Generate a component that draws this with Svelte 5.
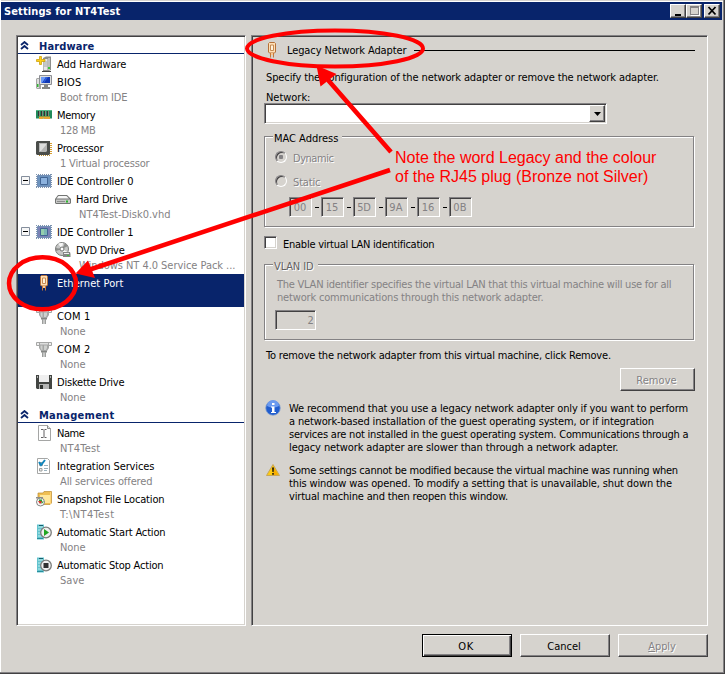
<script>
  // Spreads letters so that a label takes exactly the given advance width.
  function fit(node, width) {
    const natural = node.getBoundingClientRect().width;
    const count = node.textContent.length;
    node.style.letterSpacing = `${(width - 0.6 - natural) / count}px`;
  }

  const hardware = [
    { icon: 'add', name: ['Add Hardware', 71] },
    { icon: 'bios', name: ['BIOS', 26], sub: ['Boot from IDE', 69] },
    { icon: 'memory', name: ['Memory', 40], sub: ['128 MB', 37] },
    { icon: 'cpu', name: ['Processor', 48], sub: ['1 Virtual processor', 91] },
    { icon: 'ide', name: ['IDE Controller 0', 78], open: true },
    { icon: 'disk', name: ['Hard Drive', 53], sub: ['NT4Test-Disk0.vhd', 93], child: true },
    { icon: 'ide1', name: ['IDE Controller 1', 78], open: true },
    { icon: 'dvd', name: ['DVD Drive', 50], sub: ['Windows NT 4.0 Service Pack ...', 158], child: true },
    { icon: 'plug', name: ['Ethernet Port', 68], sub: ['', 0], selected: true },
    { icon: 'com', name: ['COM 1', 35], sub: ['None', 27] },
    { icon: 'com', name: ['COM 2', 35], sub: ['None', 27] },
    { icon: 'floppy', name: ['Diskette Drive', 69], sub: ['None', 27] },
  ];
  const management = [
    { icon: 'name', name: ['Name', 29], sub: ['NT4Test', 42] },
    { icon: 'services', name: ['Integration Services', 99], sub: ['All services offered', 94] },
    { icon: 'snapshot', name: ['Snapshot File Location', 109], sub: ['T:\\NT4Test', 56] },
    { icon: 'start', name: ['Automatic Start Action', 110], sub: ['None', 27] },
    { icon: 'stop', name: ['Automatic Stop Action', 108], sub: ['Save', 26] },
  ];
  const sections = [
    { title: ['Hardware', 57], items: hardware },
    { title: ['Management', 77], items: management },
  ];
  const mac = ['00', '15', '5D', '9A', '16', '0B'];
  const vlanHelp = [
    ['The VLAN identifier specifies the virtual LAN that this virtual machine will use for all', 396],
    ['network communications through this network adapter.', 268],
  ];
  const info = [
    ['We recommend that you use a legacy network adapter only if you want to perform', 400.5],
    ['a network-based installation of the guest operating system, or if integration', 366.5],
    ['services are not installed in the guest operating system. Communications through a', 401],
    ['legacy network adapter are slower than through a network adapter.', 331],
  ];
  const warning = [
    ['Some settings cannot be modified because the virtual machine was running when', 390.5],
    ['this window was opened. To modify a setting that is unavailable, shut down the', 384.5],
    ['virtual machine and then reopen this window.', 220.5],
  ];
</script>

{#snippet label([text, width], cls = '')}
  <span class="t {cls}" use:fit={width}>{text}</span>
{/snippet}

{#snippet icon(kind)}
  <svg class="icon" width="16" height="16" viewBox="0 0 16 16">
    {#if kind === 'add'}
      <path d="M7 2l3-1.500h5V14l-2 1H7z" fill="#8c8e8c" />
      <path d="M7.500 3h4v11h-4z" fill="#e7e7e7" /><path d="M12 2h2v12h-2z" fill="#bdbebd" />
      <path d="M8 6h3M8 8h3M8 10h3" stroke="#a5a6a5" />
      <path d="M12 11h2v2h-2z" fill="#39c739" />
      <path d="M6 15.500h9" stroke="#424142" />
      <path d="M3.500 .5h2v3h3.500v2H5.500v3h-2v-3H.5v-2h3z" fill="#ffcf18" stroke="#c69a00" stroke-width=".7" />
    {:else if kind === 'bios'}
      <path d="M0 5l1-1h4v11H1l-1-1z" fill="#a5a6a5" /><path d="M1 5h2v9H1z" fill="#dedfde" />
      <path d="M1 10h1.500v3H1z" fill="#31b631" />
      <path d="M3.500 1.500h12v9h-12z" fill="#dedfde" stroke="#8c8e94" />
      <path d="M5 3h9v6H5z" fill="#1038b5" /><path d="M5 3h5L6 9H5z" fill="#6b9af7" /><path d="M10 3h2l-4 6H7z" fill="#3161de" />
      <path d="M8 11h4v2h2v2H6v-2h2z" fill="#848684" />
    {:else if kind === 'memory'}
      <path d="M0 3h16v8.500H0z" fill="#218a5a" /><path d="M0 3h16v1H0z" fill="#52b684" />
      <path d="M2 4h2v5H2zM5 4h2v5H5zM8 4h2v5H8zM11 4h2v5h-2z" fill="#313431" />
      <path d="M3 4h1v5H3zM6 4h1v5H6zM9 4h1v5H9zM12 4h1v5h-1z" fill="#7b8a7b" />
      <path d="M3 9.500h11V12H8v-1H7v1H3z" fill="#e7a631" />
    {:else if kind === 'cpu'}
      <path d="M1 1h13v13l-1 1H1l-1-1V2z" fill="#4a4d4a" />
      <path d="M3 3h8v8l-1 1H3z" fill="#b5b6b5" /><path d="M4 4h6v1L5 11H4z" fill="#dedfde" />
      <path d="M15 3v11" stroke="#d69e31" stroke-width="2" stroke-dasharray="1 1" /><path d="M3 15.500h11" stroke="#b58a31" stroke-dasharray="1 1" />
    {:else if kind === 'ide' || kind === 'ide1'}
      <path d="M0 1.500h16M0 14.500h16" stroke="#7b92ad" stroke-dasharray="1 1" />
      <path d="M.5 1v14M15.500 1v14" stroke="#7b92ad" stroke-dasharray="1 1" />
      <path d="M1.500 2.500h13v11h-13z" fill={kind === 'ide' ? '#6b92bd' : '#7b82b5'} stroke="#738eb5" />
      <path d="M4.500 4.500h7v7h-7z" fill={kind === 'ide' ? '#8cb2de' : '#7bb6b5'} stroke="#426594" />
      {#if kind === 'ide1'}<path d="M5 5h3v6H5z" fill="#94cfad" />{/if}
    {:else if kind === 'disk'}
      <path d="M3 4h9l4 4v4l-1 1H1l-1-1V8z" fill="#737573" />
      <path d="M3.500 5h8L14 7.500H1.500z" fill="#f7f7f7" /><path d="M1 8.500h14V12H1z" fill="#c6c7c6" />
      <path d="M2 10.500h8" stroke="#8c8e8c" /><path d="M11 9.500h2v2h-2z" fill="#29b629" />
    {:else if kind === 'dvd'}
      <circle cx="7" cy="7" r="6.500" fill="#c6c7c6" stroke="#7b7d7b" />
      <path d="M7 7L3 1.500 8 .8zM7 7l5.500 3-3 3z" fill="#f7f7f7" /><path d="M7 7L1 6v3zM7 7l6-3-3-3z" fill="#8c8e8c" />
      <circle cx="7" cy="7" r="2" fill="#fff" stroke="#737573" />
      <path d="M8 10h7l.5 2v3H8v-3z" fill="#848684" /><path d="M9 11h5v1H9z" fill="#efefef" /><path d="M12 13h2v1h-2z" fill="#39c739" />
    {:else if kind === 'plug'}
      <path d="M4.500 1.500l1-1h5l1 1V10l-1 1h-5l-1-1z" fill="#ffdfb5" stroke="#b57139" />
      <path d="M6.500 3v5.500h3V3z" fill="#fff3de" stroke="#c68a52" />
      <path d="M6.500 11v4.500M9.500 11v4.500" stroke="#c67939" /><path d="M7 11h2v2H7z" fill="#f7c794" />
    {:else if kind === 'com'}
      <path d="M.5 1.500h15v3h-15z" fill="#efefef" stroke="#a5a6a5" />
      <path d="M3 1h10v6l-2 3H5L3 7z" fill="#a5a6a5" />
      <path d="M4 2h8v1.500H4z" fill="#dedfde" /><path d="M4.500 4.500h2V9h-1l-1-2zM8 4.500h3V7l-1 2H8z" fill="#ced0ce" />
      <path d="M5 10h6v1.500H5z" fill="#848684" />
      <path d="M6 11h1.500v5H6zM8.500 11H10v5H8.500z" fill="#9c9e9c" /><path d="M7 12h2v4H7z" fill="#c6c7c6" />
    {:else if kind === 'floppy'}
      <path d="M0 1h16v14H1l-1-1z" fill="#424542" /><path d="M3 1h10v7H3z" fill="#efefef" />
      <path d="M3 10h10v5H3z" fill="#b5b6b5" /><path d="M4 11h3v4H4z" fill="#313431" />
      <path d="M1 2h1v2H1zM14 2h1v2h-1z" fill="#adaead" />
    {:else if kind === 'name'}
      <path d="M2.500.5h9l3 3v12h-12z" fill="#fff" stroke="#a5a6a5" /><path d="M11.500.5v3h3" fill="#dedfde" stroke="#8c8e8c" />
      <path d="M5 4.500h2.500M8.500 4.500h2M8 5v7M5 12.500h2.500M8.500 12.500h2" stroke="#636163" />
    {:else if kind === 'services'}
      <path d="M1.500.5h10l2 2v13h-12z" fill="#fff" stroke="#a5a6a5" />
      <path d="M3.500 4.500h3v3h-3zM3.500 10.500h2.500v2.500h-2.500z" fill="#efefef" stroke="#9c9e9c" />
      <path d="M3 4l2 3 4-5" fill="none" stroke="#1086bd" stroke-width="2" /><path d="M8 7.500h4M8 10.500h4M8 12.500h3" stroke="#9cb2bd" />
    {:else if kind === 'snapshot'}
      <path d="M2 2h5l1-1.500h7.500V12L14 13.500H2z" fill="#efbe52" stroke="#bd8e31" stroke-width=".7" />
      <path d="M4 4h11v8H4z" fill="#ffe79c" /><path d="M14 1h1v12h-1z" fill="#ffd373" />
      <path d="M0 6h7v1.500H0z" fill="#8c8e8c" />
      <circle cx="4.500" cy="11" r="4" fill="#f7f7f7" stroke="#848684" />
      <path d="M3 8.500h3v2h2L5.500 13V11H3z" fill="#299e31" /><path d="M2 10h3l1 1-2 2z" fill="#d63429" />
    {:else if kind === 'start' || kind === 'stop'}
      <path d="M1 .5h7v15H1z" fill="#63c3ce" /><path d="M2 3h5M2 6h4M2 9h3M2 12h4" stroke="#bdefef" />
      <path d="M3 1.500h4" stroke="#185d6b" /><path d="M1 14.500h6" stroke="#298e9c" />
      <circle cx="10" cy="8.500" r="5.300" fill="#efefef" stroke="#7b7d7b" stroke-width="1.300" />
      {#if kind === 'start'}<path d="M8 5l5 3.500L8 12z" fill="#21a621" />{:else}<path d="M7.500 6h5v5h-5z" fill="#313031" />{/if}
    {:else if kind === 'info'}
      <circle cx="8" cy="8" r="7.300" fill="#215dce" stroke="#8ca6ce" stroke-width=".8" />
      <path d="M2 6a6 6 0 0 1 12 0q-6 3-12 0z" fill="#6b9aef" />
      <path d="M7 3h2.500v2H7zM6 6.500h3.500V12H11v1H6v-1h1V7.500H6z" fill="#fff" />
    {:else if kind === 'warn'}
      <path d="M8 2.500l6.500 11H1.500z" fill="#ffcb10" stroke="#c6a65a" stroke-linejoin="round" />
      <path d="M8 4v9h5.500z" fill="#f7ae00" />
      <path d="M7 5.500h2l-.4 4.500H7.400zM7.200 11h1.600v1.700H7.200z" fill="#211c10" />
    {/if}
  </svg>
{/snippet}

<div class="window">
  <header>
    {@render label(['Settings for NT4Test', 118], 'title')}
    <div class="controls">
      <button aria-label="Minimize"><svg width="12" height="10"><path d="M3 8h6v2H3z" /></svg></button>
      <button aria-label="Maximize" class="max"><svg width="12" height="10"><path d="M11.500 1v9M3 9.500h9" stroke="#fff" /><path d="M2 0h9v9H2zM3 2v6h7V2z" fill="#848284" fill-rule="evenodd" /></svg></button>
      <button aria-label="Close"><svg width="12" height="10"><path d="M2.500 1l7 7.500M9.500 1l-7 7.500" stroke="#000" stroke-width="1.800" /></svg></button>
    </div>
  </header>

  <main>
    <nav class="sunken">
      {#each sections as section}
        <div class="section">
          <svg width="9" height="9"><path d="M1 4l3.500-3L8 4M1 8l3.500-3L8 8" fill="none" stroke="#08246b" stroke-width="1.800" /></svg>
          {@render label(section.title, 'bold')}
        </div>
        {#each section.items as item}
          <div class="item" class:child={item.child} class:selected={item.selected}>
            <div class="twist">
              {#if item.open}<svg width="9" height="9"><path d="M.5.5h8v8h-8z" fill="#f7f7f7" stroke="#848e9c" /><path d="M2 4.500h5" stroke="#000" /></svg>{/if}
            </div>
            {@render icon(item.icon)}
            <div class="texts">
              {@render label(item.name)}
              {#if item.sub}<div class="sub">{#if item.sub[0]}{@render label(item.sub)}{/if}</div>{/if}
            </div>
          </div>
        {/each}
      {/each}
    </nav>

    <section class="sunken panel">
      <div class="heading">
        {@render icon('plug')}
        {@render label(['Legacy Network Adapter', 121])}
        <i></i>
      </div>
      <div class="intro">{@render label(['Specify the configuration of the network adapter or remove the network adapter.', 394.5])}</div>
      <div class="network">{@render label(['Network:', 46])}</div>
      <div class="combo"><button aria-label="Open list"><svg width="7" height="4"><path d="M0 0h7L3.500 4z" /></svg></button></div>

      <div class="group mac">
        <div class="legend">{@render label(['MAC Address', 66])}</div>
        <div class="radio"><span class="dot on"></span>{@render label(['Dynamic', 42], 'etched')}</div>
        <div class="radio"><span class="dot"></span>{@render label(['Static', 29], 'etched')}</div>
        <div class="bytes">
          {#each mac as byte, i}
            {#if i}<b></b>{/if}
            <div class="field">{@render label([byte, byte.match(/[A-D]/) ? 15 : 14])}</div>
          {/each}
        </div>
      </div>

      <div class="check"><span class="box"></span>{@render label(['Enable virtual LAN identification', 153])}</div>

      <div class="group vlan">
        <div class="legend">{@render label(['VLAN ID', 41], 'etched')}</div>
        <div class="help">{#each vlanHelp as line}{@render label(line)}{/each}</div>
        <div class="field">{@render label(['2', 8])}</div>
      </div>

      <div class="removal">{@render label(['To remove the network adapter from this virtual machine, click Remove.', 346.5])}</div>
      <div class="push remove">{@render label(['Remove', 42], 'etched')}</div>

      <div class="note">{@render icon('info')}<div>{#each info as line}{@render label(line)}{/each}</div></div>
      <div class="note second">{@render icon('warn')}<div>{#each warning as line}{@render label(line)}{/each}</div></div>
    </section>
  </main>

  <footer>
    <div class="push default">{@render label(['OK', 17])}</div>
    <div class="push">{@render label(['Cancel', 35])}</div>
    <div class="push"><span class="t etched" use:fit={29}><u>A</u>pply</span></div>
  </footer>

  <svg class="marks" width="725" height="674" fill="none" stroke="#f00">
    <ellipse cx="335" cy="48.500" rx="88" ry="18" stroke-width="4" />
    <ellipse cx="42.500" cy="283.300" rx="33.500" ry="26" stroke-width="4.500" />
    <path d="M391 152L328 80M390 170L90 269.500" stroke-width="4.600" />
    <path d="M316.500 65.500L320.500 86.500 336.500 74zM75.500 273.500L88 260.500 95 278z" fill="#f00" stroke="none" />
  </svg>
  <div class="callout">
    <span use:fit={263}>Note the word Legacy and the colour</span>
    <span use:fit={255}>of the RJ45 plug (Bronze not Silver)</span>
  </div>
</div>

<style>
  .window {
    position: relative;
    box-sizing: border-box;
    width: 725px;
    height: 674px;
    padding: 2px 2px 0 1px;
    background: #d6d3ce;
    border-right: 1px solid #424142;
    border-bottom: 1px solid #424142;
    box-shadow: inset -1px -1px #848284, inset 1px 0 #fff, inset 0 1px #d6d3ce, inset 0 2px #fff;
    font: 11px 'DejaVu Sans Condensed', 'DejaVu Sans', sans-serif;
    font-stretch: condensed;
    color: #000;
    overflow: hidden;
  }
  .t {
    display: block;
    width: max-content;
    height: 13px;
    padding-left: 1px;
    line-height: 13px;
    white-space: nowrap;
    flex: none;
  }
  .bold, .title { font-weight: bold; }
  .etched { color: #848284; text-shadow: 1px 1px #fff; }
  svg { display: block; flex: none; }
  button { padding: 0; margin: 0; }

  header {
    display: flex;
    justify-content: space-between;
    height: 18px;
    background: #08246b;
    color: #fff;
  }
  .title { margin: 3px 0 0 2px; }
  .controls { display: flex; padding: 2px 2px 0 0; }
  .controls button, .combo button {
    box-sizing: border-box;
    width: 16px;
    height: 14px;
    background: #d6d3ce;
    border: 1px solid;
    border-color: #fff #424142 #424142 #fff;
    box-shadow: inset -1px -1px #848284;
  }
  .controls svg { margin: 1px; }
  .controls button:last-child { margin-left: 2px; }

  main { display: flex; gap: 5px; padding: 15px 0 0 15px; }
  .sunken {
    box-sizing: border-box;
    height: 591px;
    border: 1px solid;
    border-color: #848284 #fff #fff #848284;
    padding: 1px;
    box-shadow: inset 1px 1px #424142, inset -1px -1px #d6d3ce;
  }
  nav { width: 230px; background: #fff; }
  .section {
    box-sizing: border-box;
    display: flex;
    height: 17px;
    margin-bottom: 1px;
    padding: 3px 0 0 2px;
    gap: 9px;
    color: #08246b;
    border-bottom: 1px solid #08246b;
  }
  .section svg { margin-top: 1px; }
  .item { display: flex; align-items: flex-start; padding-left: 3px; }
  .item :global(.icon) { margin-top: 1px; }
  .twist { width: 15px; padding-top: 4px; }
  .child .twist { width: 34px; }
  .texts { padding: 3px 0 2px 4px; }
  .sub { height: 13px; margin: 2px 0 0 3px; color: #848284; }
  .selected { background: #08246b; color: #fff; }

  .panel { width: 457px; padding: 6px 0 0 12px; }
  .heading { display: flex; }
  .heading .t { margin: 2px 0 0 6px; }
  .heading i { width: 281px; height: 1px; margin: 8px 0 0 8px; background: #000; }
  .intro { margin: 13px 0 0 1px; }
  .network { margin: 7px 0 0 1px; }
  .combo {
    box-sizing: border-box;
    display: flex;
    justify-content: flex-end;
    width: 343px;
    height: 21px;
    margin-top: -1px;
    padding: 1px;
    background: #fff;
    border: 1px solid;
    border-color: #848284 #fff #fff #848284;
    box-shadow: inset 1px 1px #424142, inset -1px -1px #d6d3ce;
  }
  .combo button { height: 17px; }
  .combo svg { margin: 1px auto 0; }
  .group {
    box-sizing: border-box;
    width: 430px;
    border: 1px solid #848284;
    box-shadow: 1px 1px #fff, inset 1px 1px #fff;
  }
  .mac { height: 91px; margin-top: 12px; }
  .vlan { height: 76px; margin-top: 15px; }
  .legend { width: 69px; margin: -5px 0 0 8px; background: #d6d3ce; }
  .vlan .legend { width: 45px; }
  .vlan .legend .t { color: #636163; }
  .radio { display: flex; height: 12px; margin: 6px 0 0 10px; }
  .radio + .radio { margin-top: 12px; }
  .radio .t { margin: 1px 0 0 5px; }
  .dot {
    box-sizing: border-box;
    width: 12px;
    height: 12px;
    border: 1px solid;
    border-color: #848284 #fff #fff #848284;
    border-radius: 50%;
    box-shadow: inset 1px 1px #424142;
  }
  .on { background: radial-gradient(circle, #848284 2px, transparent 2.500px); }
  .bytes { display: flex; align-items: center; margin: 10px 0 0 24px; }
  .bytes b { width: 4px; height: 1px; margin: 0 2px 0 3px; background: #000; }
  .field {
    box-sizing: border-box;
    display: flex;
    justify-content: center;
    width: 23px;
    height: 20px;
    padding: 3px 2px 0 0;
    color: #848284;
    border: 1px solid;
    border-color: #848284 #fff #fff #848284;
    box-shadow: inset 1px 1px #424142;
  }
  .check { display: flex; margin-top: 9px; height: 13px; }
  .check .t { margin: 2px 0 0 5px; }
  .box {
    box-sizing: border-box;
    width: 13px;
    height: 13px;
    background: #fff;
    border: 1px solid;
    border-color: #848284 #fff #fff #848284;
    box-shadow: inset 1px 1px #424142, inset -1px -1px #d6d3ce;
  }
  .help { margin: 5px 0 6px 11px; color: #848284; }
  .vlan .field { width: 41px; margin-left: 10px; justify-content: flex-end; padding-right: 1px; }
  .removal { margin: 9px 0 6px 1px; }
  .push {
    box-sizing: border-box;
    display: flex;
    justify-content: center;
    width: 90px;
    height: 23px;
    padding: 5px 3px 0 0;
    border: 1px solid;
    border-color: #fff #424142 #424142 #fff;
    box-shadow: inset -1px -1px #848284;
  }
  .remove { width: 75px; margin-left: 356px; }
  .note { display: flex; margin: 9px 0 0 1px; }
  .note > div { padding: 2px 0 0 7px; }
  .second { margin-top: 8px; }

  footer { display: flex; justify-content: flex-end; gap: 8px; padding: 8px 14px 0 0; }
  .default { border-color: #000; box-shadow: inset 1px 1px #fff, inset -1px -1px #424142, inset -2px -2px #848284; }

  .marks { position: absolute; left: 0; top: 0; }
  .callout {
    position: absolute;
    left: 394px;
    top: 148px;
    font: 16px/19px 'Liberation Sans', Arial, sans-serif;
    color: #f00;
  }
  .callout span { display: block; width: max-content; padding-left: 1px; white-space: nowrap; }
</style>
